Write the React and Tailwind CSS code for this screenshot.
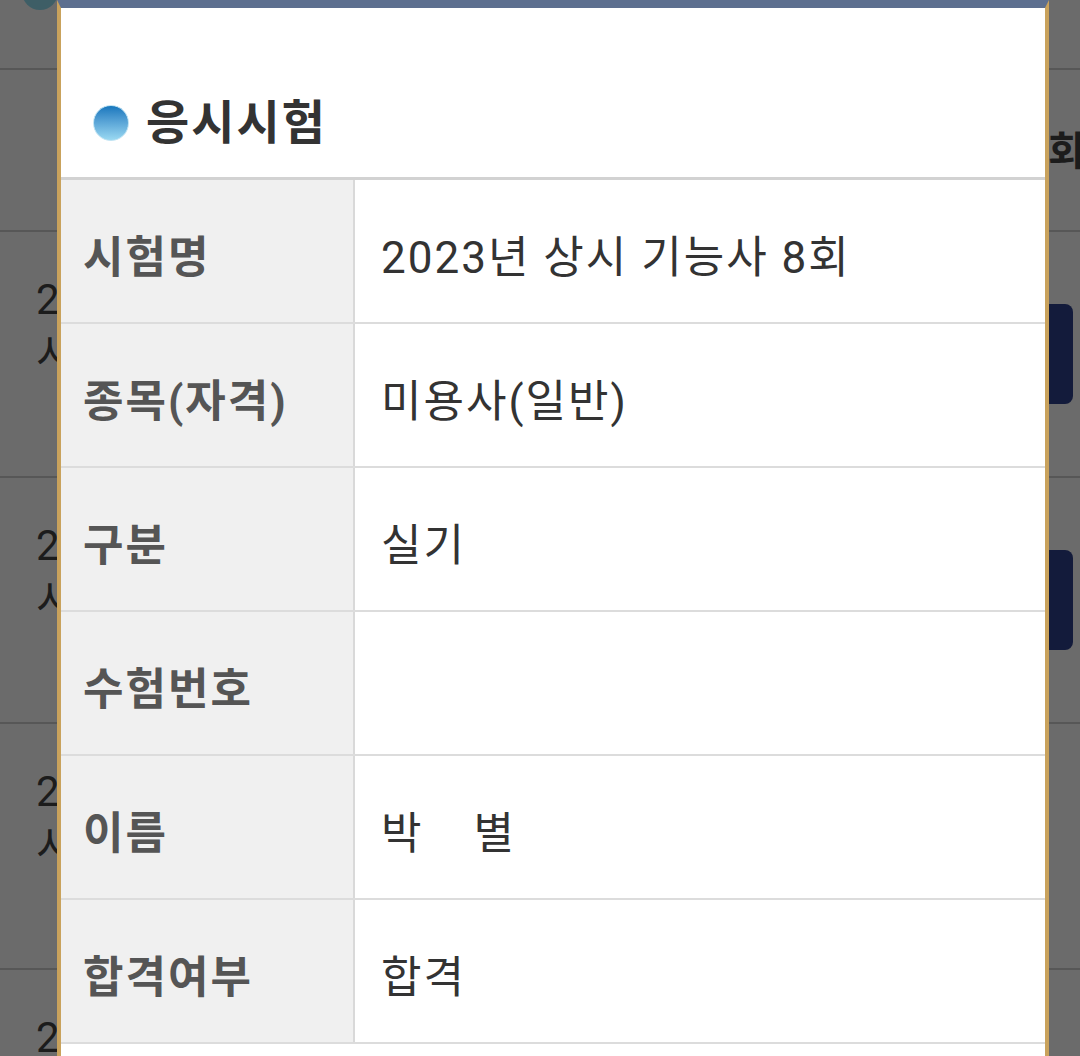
const rows = [
  { label: '시험명', value: '2023년 상시 기능사 8회' },
  { label: '종목(자격)', value: '미용사(일반)' },
  { label: '구분', value: '실기' },
  { label: '수험번호', value: '' },
  { label: '이름', value: 'name' },
  { label: '합격여부', value: '합격' },
]

const bgRows = [{ button: true }, { button: true }, { button: false }, { button: false }]

export default function App() {
  return (
    <div
      className="relative w-[1080px] h-[1056px] overflow-hidden bg-[#6b6b6b]"
      style={{ fontFamily: 'Roboto, "Noto Sans CJK KR", "Noto Sans", sans-serif' }}
    >
      {/* Page behind the dialog (dimmed) */}
      <div className="flex flex-col">
        <div className="h-[70px] border-b-2 border-[#575757]">
          <div className="-mt-[26px] ml-[22px] w-[36px] h-[36px] rounded-full bg-[#3e5e66]" />
        </div>
        <div className="h-[162px] border-b-2 border-[#575757] flex items-center justify-end overflow-hidden">
          <span className="w-[32px] overflow-hidden text-[40px] font-bold text-[#1c1c1c] whitespace-nowrap pt-[4px]">회</span>
        </div>
        {bgRows.map((r, i) => (
          <div key={i} className="h-[246px] border-b-2 border-[#575757] flex justify-between">
            <div className="w-[57px] overflow-hidden pl-[36px] pt-[40px] text-[42px] leading-[55px] text-[#1c1c1c] whitespace-nowrap">
              <div>2023년</div>
              <div>시험</div>
            </div>
            {r.button && (
              <div className="pt-[72px] pr-[7px]">
                <div className="w-[60px] h-[100px] rounded-lg bg-[#131b3b]" />
              </div>
            )}
          </div>
        ))}
      </div>

      {/* Dialog */}
      <div className="absolute left-[57px] top-0 w-[992px] h-[1100px] bg-white border-t-8 border-t-[#5d6f8f] border-x-4 border-x-[#c9a25c]">
        <div className="h-[172px] pt-[60px] pl-[32px] flex items-center gap-[17px] border-b-[3px] border-[#d2d2d2]">
          <div className="w-[36px] h-[36px] rounded-full bg-gradient-to-b from-[#1477bd] to-[#9ad9f2] border border-[#bfe3f3]" />
          <h2 className="text-[47px] font-bold tracking-[2px] text-[#333] leading-none">응시시험</h2>
        </div>
        {rows.map(row => (
          <div key={row.label} className="h-[144px] flex border-b-2 border-[#dcdcdc]">
            <div className="w-[294px] bg-[#f0f0f0] border-r-2 border-[#d9d9d9] pl-[22px] pt-[13px] flex items-center text-[44px] font-bold tracking-[2px] text-[#555]">
              {row.label}
            </div>
            <div className="flex-1 pl-[26px] pt-[13px] flex items-center text-[44px] tracking-[2px] text-[#333]">
              {row.value === 'name' ? (
                <>
                  <span>박</span>
                  <span className="ml-[50px]">별</span>
                </>
              ) : (
                row.value
              )}
            </div>
          </div>
        ))}
      </div>
    </div>
  )
}
